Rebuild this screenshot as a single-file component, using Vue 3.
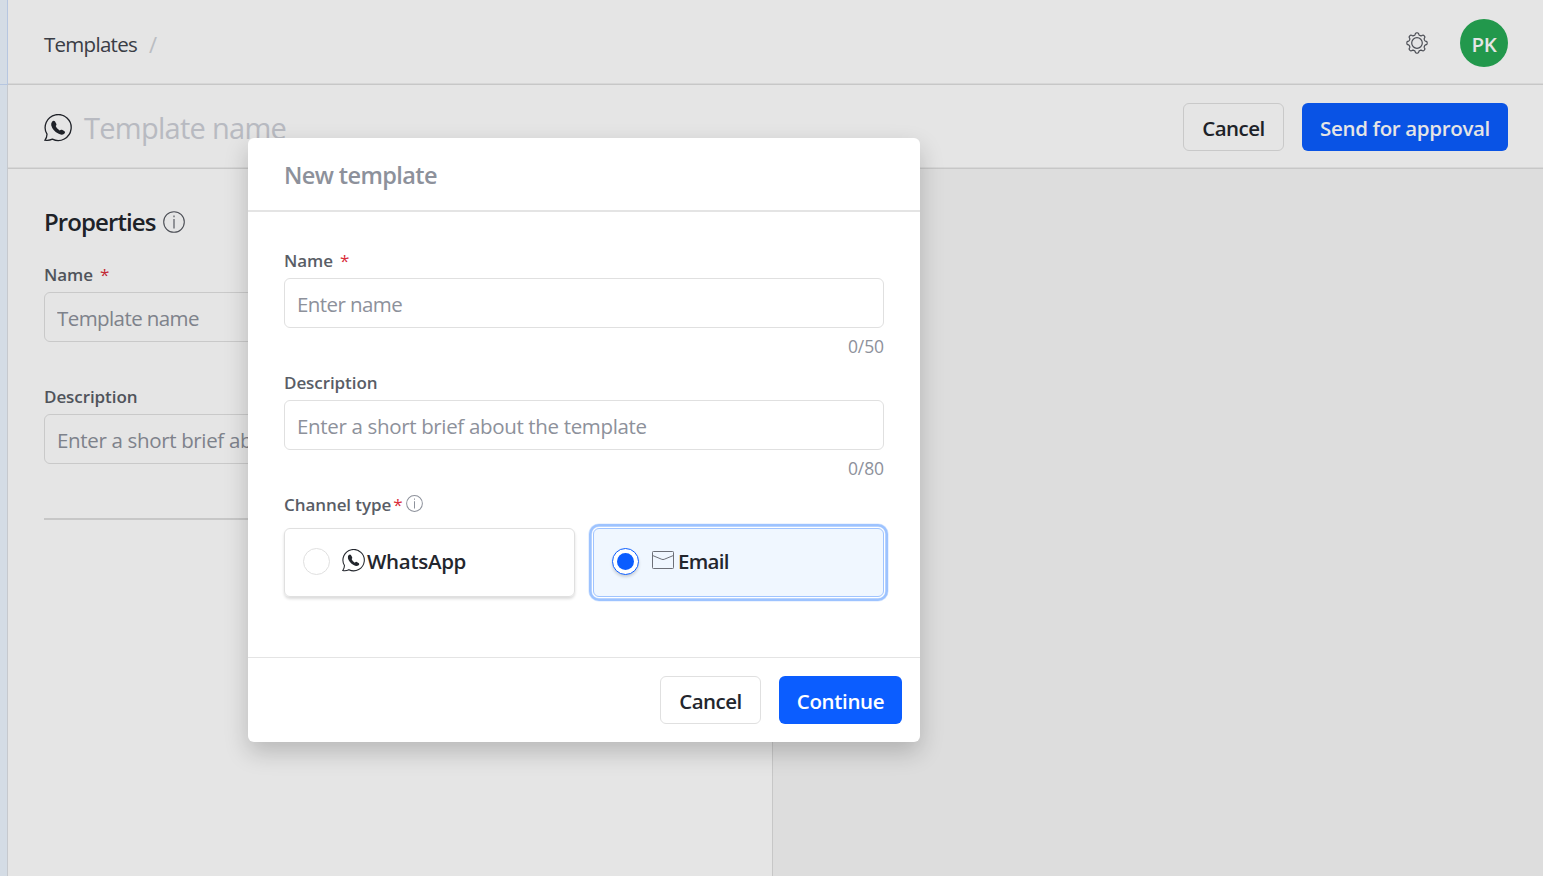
<template>

    <div class="page">
        <div class="rail">
            <div class="railTop"></div>
            <div class="railBottom"></div>
        </div>

        <div class="main">
            <header class="topBar">
                <div class="crumbs">
                    <span class="crumb">Templates</span>
                    <span class="slash">/</span>
                </div>
                <div class="topRight">
                    <svg class="gear" viewBox="-11 -11 22 22">
                        <path :d="gearPath" />
                        <circle r="5.3" />
                    </svg>
                    <div class="avatar"><span>PK</span></div>
                </div>
            </header>

            <div class="titleBar">
                <div class="titlePart">
                    <svg class="whatsapp big" viewBox="0 0 28 28">
                        <path class="bubble" :d="bubblePath" />
                        <path class="phone" :d="phonePath" />
                    </svg>
                    <span class="titleText">Template name</span>
                </div>
                <div class="buttons">
                    <button class="button cancel"><span>Cancel</span></button>
                    <button class="button primary send"><span>Send for approval</span></button>
                </div>
            </div>

            <div class="content">
                <section class="properties">
                    <h2 class="heading">
                        <span>Properties</span>
                        <svg class="info infoBig" viewBox="0 0 22 22">
                            <circle cx="11" cy="11" r="10.3" />
                            <path d="M11 8V17.6M11 4.6V6.2" />
                        </svg>
                    </h2>
                    <div class="field" v-for="field in panelFields" :key="field.label">
                        <label class="label"><span>{{ field.label }}</span><span v-if="field.required" class="star">*</span></label>
                        <input class="input" :class="{ tight: field.required }" type="text" :placeholder="field.placeholder">
                    </div>
                    <div class="line"></div>
                </section>
                <section class="preview"></section>
            </div>
        </div>

        <div class="backdrop">
            <div class="modal">
                <div class="modalHeader"><span>New template</span></div>

                <div class="modalBody">
                    <div class="field" v-for="field in modalFields" :key="field.label">
                        <label class="label"><span>{{ field.label }}</span><span v-if="field.required" class="star">*</span></label>
                        <input class="input" :class="{ tight: field.required }" type="text" v-model="field.value" :placeholder="field.placeholder" :maxlength="field.max">
                        <div class="counter">{{ field.value.length }}/{{ field.max }}</div>
                    </div>

                    <div class="label channelLabel">
                        <span>Channel type</span><span class="star">*</span>
                        <svg class="info infoSmall" viewBox="0 0 22 22">
                            <circle cx="11" cy="11" r="10.2" />
                            <path d="M11 8V17.6M11 4.6V6.2" />
                        </svg>
                    </div>
                    <div class="channels">
                        <div class="channel" :class="{ selected: channel === 'whatsapp' }" @click="channel = 'whatsapp'">
                            <div class="radio"></div>
                            <svg class="whatsapp small" viewBox="0 0 28 28">
                                <path class="bubble" :d="bubblePath" />
                                <path class="phone" :d="phonePath" />
                            </svg>
                            <span class="whatsappText">WhatsApp</span>
                        </div>
                        <div class="channel" :class="{ selected: channel === 'email' }" @click="channel = 'email'">
                            <div class="radio"></div>
                            <svg class="mail" viewBox="0 0 22 18">
                                <rect x="0.5" y="0.5" width="21" height="17" rx="0.8" />
                                <path d="M0.8 4.6L9.8 8.3Q11 8.8 12.2 8.3L21.2 4.6" />
                            </svg>
                            <span class="emailText">Email</span>
                        </div>
                    </div>
                </div>

                <div class="modalFooter">
                    <button class="button cancel"><span>Cancel</span></button>
                    <button class="button primary continue"><span>Continue</span></button>
                </div>
            </div>
        </div>
    </div>

</template>



<script setup>
    import { ref } from 'vue'

    const channel = ref('email')

    const panelFields = [
        { label: 'Name', placeholder: 'Template name', required: true },
        { label: 'Description', placeholder: 'Enter a short brief about the template' }
    ]

    const modalFields = ref([
        { label: 'Name', placeholder: 'Enter name', required: true, value: '', max: 50 },
        { label: 'Description', placeholder: 'Enter a short brief about the template', value: '', max: 80 }
    ])

    const bubblePath = 'M3 20.2A13 13 0 1 1 8.4 25.2Q4.8 26.9 1 26.2Q2.9 23.5 3 20.2Z'
    const phonePath = 'M8.2 7.4Q9.8 6.2 10.9 7.3L12.4 9.9Q12.8 11 11.7 12.1Q12.5 14.8 15.6 16.6Q16.9 15.3 18 15.8L20.6 17.3Q21.6 18.4 20.3 19.7Q17.8 21.7 14.2 19.6Q8.6 16.4 7.2 11.2Q6.9 8.8 8.2 7.4Z'

    // eight rounded teeth
    function makeGear(){
        const points = []
        for(let i = 0; i < 144; i++){
            const a = i * Math.PI / 72
            const r = 9.1 + 1.05 * Math.tanh(2.2 * Math.cos(8 * a))
            points.push(`${(r * Math.cos(a)).toFixed(2)} ${(r * Math.sin(a)).toFixed(2)}`)
        }
        return `M${points.join('L')}Z`
    }
    const gearPath = makeGear()
</script>


<style>
body{
    margin: 0;
    overflow: hidden;
}
</style>

<style scoped>
*{
    box-sizing: border-box;
}

.page{
    position: relative;
    display: flex;
    width: 100%;
    height: 100vh;
    overflow: hidden;

    font-family: "Open Sans", "Noto Sans", sans-serif;
    font-size: 20.5px;
    color: #23262d;
    background-color: white;
}

span{
    white-space: nowrap;
}

.rail{
    display: flex;
    flex-direction: column;
    width: 8px;
    background-color: #edf5ff;
}

.railTop{
    height: 85px;
    border-right: 1px solid #cbddfa;
    border-bottom: 1px solid #cbddfa;
}

.railBottom{
    flex: 1;
    border-right: 1px solid #dde0e6;
}

.main{
    flex: 1;
    display: flex;
    flex-direction: column;
}

.topBar, .titleBar{
    display: flex;
    justify-content: space-between;
    align-items: center;
    padding: 2px 35px 0 36px;
    border-bottom: 1px solid #dedede;
    box-shadow: inset 0 -1px #f0f0f0;
}

.topBar{
    height: 85px;
}

.titleBar{
    height: 84px;
    padding-top: 1px;
}

.crumbs, .topRight, .titlePart, .buttons{
    display: flex;
    align-items: center;
}

.crumbs{
    gap: 12px;
    padding-top: 2px;
}

.crumb{
    color: #41444d;
    letter-spacing: -0.72px;
}

.slash{
    color: #d0d3d8;
    font-size: 22px;
}

.topRight{
    gap: 32px;
}

.gear{
    width: 22px;
    height: 22px;
    fill: none;
    stroke: #555860;
    stroke-width: 1.2;
}

.avatar{
    display: flex;
    justify-content: center;
    align-items: center;
    width: 48px;
    height: 48px;
    padding-top: 2px;
    border-radius: 50%;

    color: white;
    font-weight: 600;
    font-size: 20.5px;
    letter-spacing: -0.3px;
    background-color: #26aa55;
}

.titlePart{
    gap: 12px;
}

.titleText{
    color: #cdd0d7;
    font-size: 29px;
    letter-spacing: -0.72px;
}

.whatsapp .bubble{
    fill: none;
    stroke: #23262d;
    stroke-width: 1.3;
}

.whatsapp .phone{
    fill: #23262d;
}

.big{
    width: 28px;
    height: 28px;
    margin-top: 1px;
}

.small{
    width: 23px;
    height: 23px;
    margin: -3px 2px 0 12px;
}

.buttons{
    gap: 18px;
}

.button{
    display: flex;
    justify-content: center;
    align-items: center;
    height: 48px;
    padding: 1px 0 0 0;
    border-radius: 6px;

    font-family: inherit;
    font-size: 20.5px;
    font-weight: 600;
    cursor: pointer;
}

.cancel{
    width: 101px;
    border: 1px solid #e0e0e0;
    color: #23262d;
    background-color: white;
    letter-spacing: -0.55px;
}

.primary{
    border: none;
    color: white;
    background-color: #0b5dff;
    letter-spacing: -0.34px;
}

.send{
    width: 206px;
}

.continue{
    width: 123px;
}

.content{
    flex: 1;
    display: flex;
}

.properties{
    width: 765px;
    padding: 36px 36px 0 36px;
    border-right: 1px solid #dedede;
}

.preview{
    flex: 1;
    background-color: #f6f6f6;
}

.heading{
    display: flex;
    align-items: center;
    gap: 7px;
    height: 34px;
    margin: 0 0 25px 0;

    font-size: 24px;
    font-weight: 600;
    letter-spacing: -0.9px;
}

.heading span{
    margin-top: -1px;
}

.info{
    fill: none;
}

.infoBig{
    width: 22px;
    height: 22px;
    stroke: #555860;
    stroke-width: 1.1;
}

.infoSmall{
    width: 17px;
    height: 17px;
    margin: -1px 0 0 3px;
    stroke: #8d919b;
    stroke-width: 1.3;
}

.field{
    display: flex;
    flex-direction: column;
}

.properties .field{
    margin-bottom: 44px;
}

.label{
    display: flex;
    align-items: center;
    height: 20px;
    margin-bottom: 8px;

    color: #595d66;
    font-size: 17px;
    font-weight: 600;
    letter-spacing: -0.08px;
}

.star{
    margin-left: 7px;
    color: #d92d3a;
    font-weight: 400;
}

.input{
    width: 100%;
    height: 50px;
    padding: 2px 12px 0 12px;
    border: 1px solid #e0e0e0;
    border-radius: 6px;
    outline: none;

    font-family: inherit;
    font-size: 20.5px;
    letter-spacing: -0.34px;
    background-color: white;
}

.input::placeholder{
    color: #8d919b;
    opacity: 1;
}

.tight{
    letter-spacing: -0.58px;
}

.line{
    height: 2px;
    margin-top: 54px;
    background-color: #dedede;
}

.backdrop{
    position: absolute;
    inset: 0;
    padding: 138px 0 0 248px;
    background-color: rgba(0, 0, 0, 0.1);
}

.modal{
    display: flex;
    flex-direction: column;
    width: 672px;
    height: 604px;
    border-radius: 6px;
    background-color: white;
    box-shadow: 0 10px 24px rgba(0, 0, 0, 0.2);
}

.modalHeader{
    display: flex;
    align-items: center;
    height: 74px;
    padding: 2px 36px 0 36px;
    border-bottom: 2px solid #e4e4e4;

    color: #8d919b;
    font-size: 23.5px;
    font-weight: 600;
    letter-spacing: -0.6px;
}

.modalBody{
    flex: 1;
    padding: 38px 36px 0 36px;
}

.counter{
    height: 22px;
    margin: 7px 0 15px 0;

    color: #8d919b;
    font-size: 17.5px;
    line-height: 22px;
    letter-spacing: -0.1px;
    text-align: right;
}

.channelLabel{
    margin-bottom: 14px;
}

.channelLabel .star{
    margin-left: 2px;
}

.channels{
    display: flex;
    gap: 18px;
}

.channel{
    flex: 1;
    display: flex;
    align-items: center;
    height: 69px;
    padding: 0 18px 2px 18px;
    border: 1px solid #e0e0e0;
    border-radius: 6px;

    font-weight: 600;
    cursor: pointer;
    box-shadow: 0 2px 3px rgba(0, 0, 0, 0.14);
}

.channel span{
    margin-top: -1px;
}

.selected{
    border-color: #a0c4ff;
    background-color: #f0f7ff;
    box-shadow: 0 0 0 1px white, 0 0 0 1.5px #d3e4ff, 0 0 0 4px #9dc3ff, 0 0 0 4.6px #d9e8ff;
}

.radio{
    display: flex;
    justify-content: center;
    align-items: center;
    width: 27px;
    height: 27px;
    border: 1px solid #e0e0e0;
    border-radius: 50%;
    background-color: white;
}

.selected .radio{
    border-color: #0b5dff;
    box-shadow: 0 2px 3px rgba(0, 0, 0, 0.16);
}

.selected .radio::before{
    content: "";
    width: 17px;
    height: 17px;
    border-radius: 50%;
    background-color: #0b5dff;
}

.mail{
    width: 22px;
    height: 18px;
    margin: -3px 4px 0 13px;
    fill: none;
    stroke: #6d7078;
    stroke-width: 1;
}

.whatsappText{
    letter-spacing: -0.3px;
}

.emailText{
    letter-spacing: -0.7px;
}

.modalFooter{
    display: flex;
    justify-content: flex-end;
    gap: 18px;
    height: 85px;
    padding: 18px;
    border-top: 1px solid #e4e4e4;
}
</style>
